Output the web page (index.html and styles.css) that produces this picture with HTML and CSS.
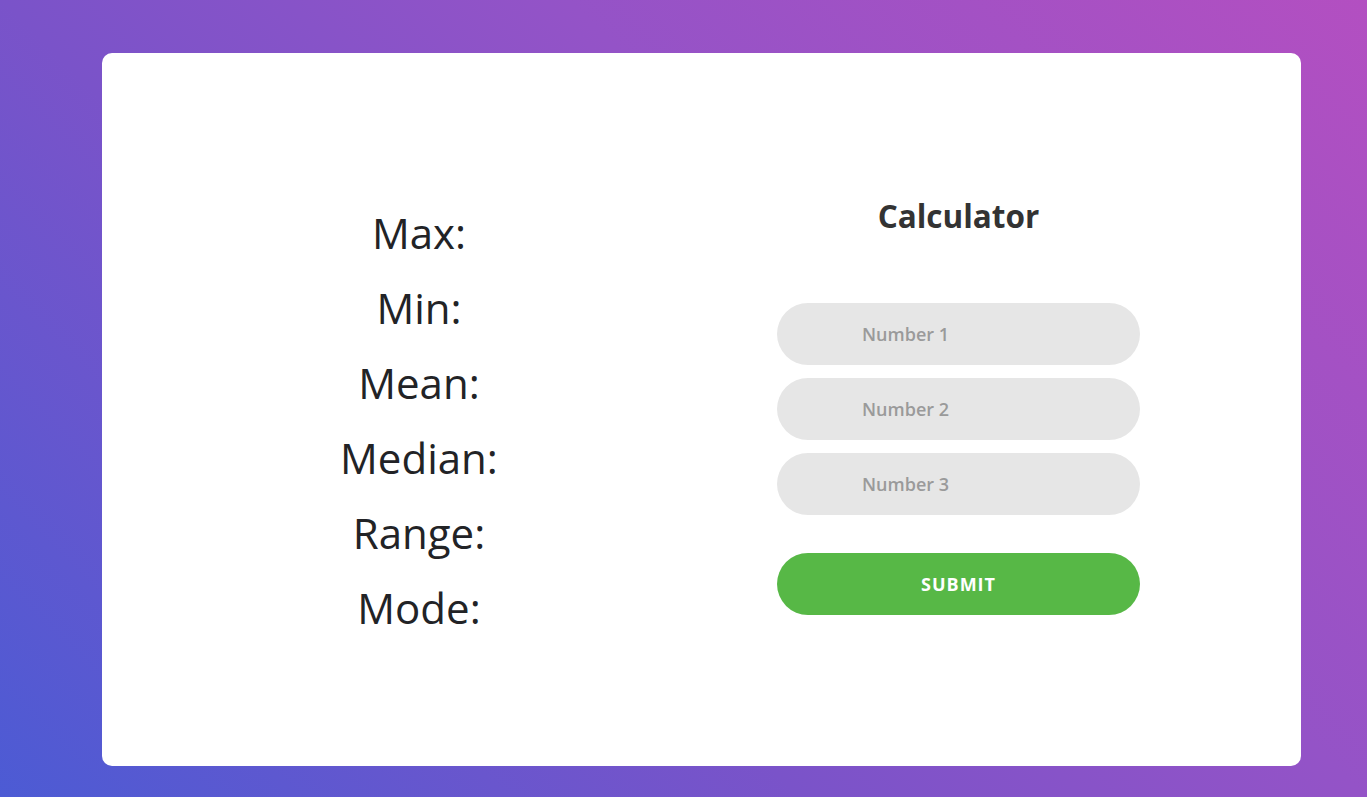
FILE: index.html
```html
<!DOCTYPE html>
<html lang="en">
<head>
<meta charset="utf-8">
<title>Calculator</title>
<link rel="stylesheet" href="styles.css">
</head>
<body>
<div class="page">
  <main class="card">
    <section class="stats">
      <div class="stat">Max:</div>
      <div class="stat">Min:</div>
      <div class="stat">Mean:</div>
      <div class="stat">Median:</div>
      <div class="stat">Range:</div>
      <div class="stat">Mode:</div>
    </section>
    <form class="calc">
      <h1 class="calc-title">Calculator</h1>
      <input class="calc-input" type="text" placeholder="Number 1">
      <input class="calc-input" type="text" placeholder="Number 2">
      <input class="calc-input" type="text" placeholder="Number 3">
      <div class="calc-actions">
        <button class="calc-btn" type="button">Submit</button>
      </div>
    </form>
  </main>
</div>
</body>
</html>
```
FILE: styles.css
```css
html, body {
  margin: 0;
  padding: 0;
}

body {
  font-family: "Open Sans", "Liberation Sans", sans-serif;
  background: linear-gradient(-135deg, #b34fc1 0%, #9453c7 37%, #7a53c9 63%, #4c5bd4 100%);
  min-height: 797px;
  overflow: hidden;
}

.page {
  padding: 53px 0 0 102px;
}

.card {
  box-sizing: border-box;
  width: 1199px;
  height: 713px;
  background: #fff;
  border-radius: 10px;
  padding: 142px 161px 0 119px;
  display: flex;
  justify-content: space-between;
  align-items: flex-start;
}

.stats {
  width: 396px;
  display: flex;
  flex-direction: column;
  align-items: center;
}

.stat {
  font-size: 42px;
  font-weight: 400;
  line-height: 75px;
  color: #222326;
}

.calc {
  width: 363px;
  padding-top: 2px;
  display: flex;
  flex-direction: column;
}

.calc-title {
  margin: 0;
  padding-bottom: 69px;
  font-size: 31.5px;
  font-weight: 700;
  line-height: 37px;
  color: #333;
  text-align: center;
}

.calc-input {
  box-sizing: border-box;
  width: 100%;
  height: 62px;
  margin: 0 0 13px;
  border: none;
  outline: none;
  border-radius: 31px;
  background: #e6e6e6;
  padding: 0 37px 0 85px;
  font-family: "Open Sans", "Liberation Sans", sans-serif;
  font-size: 18px;
  font-weight: 600;
  color: #666;
}

.calc-input::placeholder {
  color: #9a9a9a;
  opacity: 1;
}

.calc-actions {
  padding-top: 25px;
}

.calc-btn {
  display: block;
  width: 100%;
  height: 62px;
  border: none;
  border-radius: 31px;
  background: #57b846;
  color: #fff;
  font-family: "Open Sans", "Liberation Sans", sans-serif;
  font-size: 18px;
  font-weight: 700;
  letter-spacing: 1px;
  text-transform: uppercase;
  cursor: pointer;
}
```
